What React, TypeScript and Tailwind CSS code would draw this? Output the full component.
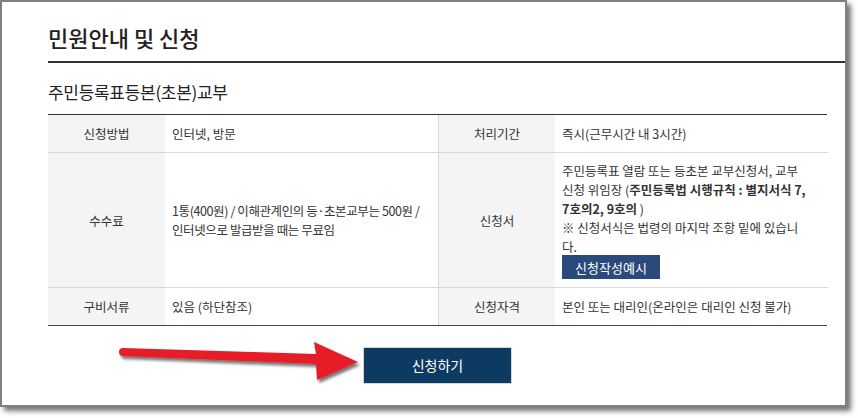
import React from 'react';

const font = { fontFamily: '"Noto Sans CJK KR", "Noto Sans", sans-serif' };

function Label({ children, border = false }: { children: React.ReactNode; border?: boolean }) {
  return (
    <div
      className={`flex min-h-[37px] items-center justify-center bg-[#f4f4f4] text-[#333] ${
        border ? 'border-l border-[#d9d9d9]' : ''
      }`}
    >
      {children}
    </div>
  );
}

function Value({ children }: { children: React.ReactNode }) {
  return <div className="flex min-h-[37px] items-center px-[7px] text-[#333]">{children}</div>;
}

function RedArrow() {
  return (
    <svg
      className="pointer-events-none absolute left-[110px] top-[330px]"
      width="260"
      height="62"
      viewBox="0 0 260 62"
    >
      <defs>
        <filter id="arrowShadow" x="-10%" y="-30%" width="120%" height="160%">
          <feDropShadow dx="2" dy="3" stdDeviation="1.4" floodColor="#000" floodOpacity="0.55" />
        </filter>
      </defs>
      <g filter="url(#arrowShadow)" fill="#e61e28">
        <polygon points="13,18 206,24 204,12 248,32 207,50 206,34 13,26" />
        <circle cx="13" cy="22" r="4" />
      </g>
    </svg>
  );
}

export default function App() {
  return (
    <div className="relative h-[418px] w-[858px] overflow-hidden bg-white" style={font}>
      <div className="box-border h-[407px] w-[847px] border-2 border-[#808080] bg-white pl-[46px] shadow-[4px_4px_5px_rgba(0,0,0,0.55)]">
        {/* title */}
        <h1 className="pt-[20px] pb-[9px] text-[22px] leading-[30px] font-medium text-[#222]">
          민원안내 및 신청
        </h1>
        <div className="h-[2px] bg-[#333]" />

        <h2 className="mt-[17px] text-[17px] leading-[24px] tracking-[-0.3px] text-[#222]">
          주민등록표등본(초본)교부
        </h2>

        {/* info table */}
        <div className="mt-[10px] mr-[18px] grid grid-cols-[117px_273px_117px_273px] border-t border-b border-t-[#333] border-b-[#444] text-[12.5px] leading-[19px]">
          <Label>신청방법</Label>
          <Value>인터넷, 방문</Value>
          <Label border>처리기간</Label>
          <Value>즉시(근무시간 내 3시간)</Value>

          <div className="col-span-4 h-px bg-[#d9d9d9]" />

          <Label>수수료</Label>
          <Value>
            <span className="whitespace-nowrap tracking-[-0.4px]">
              1통(400원) / 이해관계인의 등·초본교부는 500원 /<br />
              인터넷으로 발급받을 때는 무료임
            </span>
          </Value>
          <Label border>신청서</Label>
          <div className="px-[7px] pt-[8px] pb-[8px] text-[#333]">
            주민등록표 열람 또는 등초본 교부신청서, 교부
            <br />
            신청 위임장 (<b className="font-bold">주민등록법 시행규칙 : 별지서식 7,</b>
            <br />
            <b className="font-bold">7호의2, 9호의</b> )
            <br />
            ※ 신청서식은 법령의 마지막 조항 밑에 있습니
            <br />
            다.
            <div className="mt-[-1px] flex h-[24px] w-[98px] items-center justify-center bg-[#2a4a7b] text-[13px] text-white">
              신청작성예시
            </div>
          </div>

          <div className="col-span-4 h-px bg-[#d9d9d9]" />

          <Label>구비서류</Label>
          <Value>있음 (하단참조)</Value>
          <Label border>신청자격</Label>
          <Value>본인 또는 대리인(온라인은 대리인 신청 불가)</Value>
        </div>

        {/* submit */}
        <div className="mr-[18px] mt-[21px] flex justify-center">
          <button className="h-[37px] w-[149px] border border-[#cfd6dd] bg-[#0d3a60] text-[14px] text-white">
            신청하기
          </button>
        </div>
      </div>

      <RedArrow />
    </div>
  );
}
